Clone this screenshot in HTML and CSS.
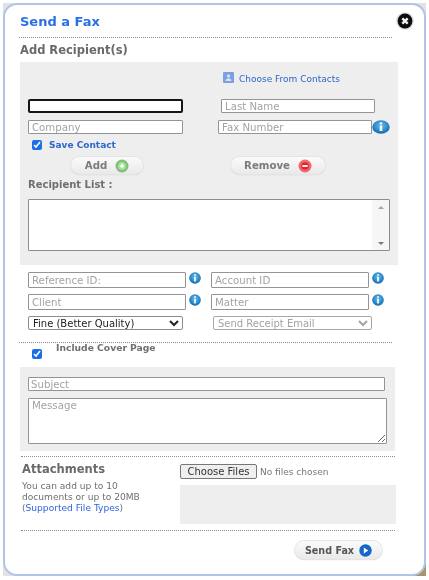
FILE: index.html
```html
<!DOCTYPE html>
<html lang="en">
<head>
    <meta charset="UTF-8">
    <meta name="viewport" content="width=device-width, initial-scale=1.0">
    <title>Send a Fax</title>
    <link rel="stylesheet" href="styles.css">
</head>
<body>
    <svg class="icon-defs" width="0" height="0">
        <defs>
            <radialGradient id="info-fill" cx="50%" cy="40%" r="60%">
                <stop offset="0" stop-color="#6fbbe8"/>
                <stop offset="0.6" stop-color="#2f8fd0"/>
                <stop offset="1" stop-color="#0d66a8"/>
            </radialGradient>
            <symbol id="info" viewBox="0 0 14 14" preserveAspectRatio="none">
                <circle cx="7" cy="7" r="6.8" fill="url(#info-fill)"/>
                <circle cx="7" cy="3.4" r="1.1" fill="#fff"/>
                <rect x="6" y="5.6" width="2" height="5.4" fill="#fff"/>
            </symbol>
        </defs>
    </svg>
    <div class="frame">
    <div class="modal">
        <div class="modal-head">
            <h1 class="title">Send a Fax</h1>
            <svg class="close" width="18" height="18" viewBox="0 0 18 18">
                <circle cx="9" cy="9" r="8.8" fill="#d8d8d8"/>
                <circle cx="9" cy="9" r="7.4" fill="#0c0c0c"/>
                <path d="M6.3 6.3l5.4 5.4M11.7 6.3l-5.4 5.4" stroke="#f2f2f2" stroke-width="2.4"/>
            </svg>
        </div>
        <div class="dots"></div>
        <h2 class="section-title">Add Recipient(s)</h2>

        <div class="panel panel-recipient">
            <div class="contacts-row">
                <svg width="11" height="11" viewBox="0 0 11 11">
                    <rect width="11" height="11" rx="1" fill="#7c9fe0"/>
                    <circle cx="5.5" cy="4" r="1.7" fill="#d5e0f6"/>
                    <path d="M2.5 9c0-2 1.3-2.8 3-2.8s3 .8 3 2.8z" fill="#d5e0f6"/>
                </svg>
                <a class="link contacts-link">Choose From Contacts</a>
            </div>
            <div class="row row-name">
                <input class="field field-focus w155" type="text">
                <input class="field w154 ml38" type="text" placeholder="Last Name">
            </div>
            <div class="row row-company">
                <input class="field w155" type="text" placeholder="Company">
                <input class="field w154 ml35" type="text" placeholder="Fax Number">
                <svg class="info info-fax"><use href="#info"/></svg>
            </div>
            <label class="save-contact">
                <input class="check" type="checkbox" checked>
                <span class="link link-bold">Save Contact</span>
            </label>
            <div class="row-buttons">
                <button class="pill pill-add" type="button">Add
                    <svg width="14" height="14" viewBox="0 0 14 14">
                        <circle cx="7" cy="7" r="6.5" fill="#7cc473"/>
                        <circle cx="7" cy="7" r="4" fill="#a9dca0"/>
                        <path d="M7 4.8v4.4M4.8 7h4.4" stroke="#fff" stroke-width="1.6"/>
                    </svg>
                </button>
                <button class="pill pill-remove" type="button">Remove
                    <svg width="14" height="14" viewBox="0 0 14 14">
                        <circle cx="7" cy="7" r="6.5" fill="#f0686c"/>
                        <circle cx="7" cy="7" r="3.8" fill="#e0262f"/>
                        <path d="M4.3 7h5.4" stroke="#fff" stroke-width="1.8"/>
                    </svg>
                </button>
            </div>
            <div class="list-label">Recipient List :</div>
            <div class="listbox">
                <div class="scroll">
                    <span class="arrow-up"></span>
                    <span class="arrow-down"></span>
                </div>
            </div>
        </div>

        <div class="details">
            <div class="row">
                <input class="field w158 tall" type="text" placeholder="Reference ID:">
                <svg class="info info-detail"><use href="#info"/></svg>
                <input class="field w158 tall ml10" type="text" placeholder="Account ID">
                <svg class="info info-detail"><use href="#info"/></svg>
            </div>
            <div class="row row-client">
                <input class="field w158 tall" type="text" placeholder="Client">
                <svg class="info info-detail"><use href="#info"/></svg>
                <input class="field w158 tall ml10" type="text" placeholder="Matter">
                <svg class="info info-detail"><use href="#info"/></svg>
            </div>
            <div class="row row-select">
                <select class="pick w155">
                    <option>Fine (Better Quality)</option>
                </select>
                <select class="pick pick-muted w159 ml30">
                    <option>Send Receipt Email</option>
                </select>
            </div>
        </div>

        <div class="dots dots-cover"></div>
        <div class="cover-row">
            <input class="check" type="checkbox" checked>
            <span class="cover-label">Include Cover Page</span>
        </div>

        <div class="panel panel-cover">
            <input class="field subject" type="text" placeholder="Subject">
            <textarea class="field message" placeholder="Message"></textarea>
        </div>

        <div class="dots dots-wide dots-attach"></div>
        <div class="attachments">
            <div class="attach-text">
                <h2 class="section-title">Attachments</h2>
                <div class="attach-note">
                    <div>You can add up to 10</div>
                    <div>documents or up to 20MB</div>
                    <div>(<a class="link-plain">Supported File Types</a>)</div>
                </div>
            </div>
            <div class="attach-files">
                <div class="file-row">
                    <button class="file-btn" type="button">Choose Files</button>
                    <span class="file-status">No files chosen</span>
                </div>
                <div class="file-list"></div>
            </div>
        </div>
        <div class="dots dots-wide dots-send"></div>
        <div class="send-row">
            <button class="pill pill-send" type="button">Send Fax
                <svg width="13" height="13" viewBox="0 0 13 13">
                    <circle cx="6.5" cy="6.5" r="6.2" fill="#1466c8"/>
                    <path d="M4.8 3.6l4.4 2.9-4.4 2.9z" fill="#fff"/>
                </svg>
            </button>
        </div>
    </div>
    </div>
</body>
</html>
```

FILE: styles.css
```css
* {
    box-sizing: border-box;
}
body {
    margin: 0;
    background-color: #fff;
    font-family: "DejaVu Sans", Verdana, sans-serif;
    color: #6f6f6f;
}
.icon-defs {
    display: block;
}
.frame {
    width: 423px;
    height: 573px;
    margin: 3px 0 0 3px;
    background: linear-gradient(#a8946a, #a8946a) right bottom / 14px 14px no-repeat, #e2e2e2;
    filter: blur(0.55px);
}
.modal {
    height: 573px;
    padding: 0 0 0 15px;
    background-color: #fff;
    border: 2px solid #b0c4ea;
    border-radius: 14px;
}
.modal-head {
    display: flex;
    justify-content: space-between;
    align-items: center;
    height: 32px;
    padding: 0 10px 0 0;
}
.title {
    margin: 0;
    font-size: 13px;
    color: #2a6fe8;
}
.dots {
    width: 373px;
    margin-left: -1px;
    border-top: 1px dotted #8d8d8d;
}
.dots-wide {
    width: 374px;
    margin-left: 1px;
}
.section-title {
    margin: 6px 0 0;
    height: 12px;
    font-size: 11.5px;
    line-height: 12px;
    color: #6a6a6a;
}
.panel {
    background-color: #eee;
    padding-left: 8px;
}
.panel-recipient {
    width: 378px;
    height: 203px;
    margin-top: 6px;
    padding-top: 10px;
}
.panel-cover {
    width: 375px;
    height: 84px;
    padding-top: 10px;
}
.contacts-row {
    display: flex;
    align-items: flex-start;
    gap: 5px;
    height: 11px;
    margin-left: 195px;
}
.link {
    color: #2c66cc;
}
.contacts-link {
    font-size: 9px;
    line-height: 15px;
}
.link-bold {
    font-size: 9px;
    font-weight: bold;
}
.row {
    display: flex;
    align-items: center;
}
.row-name {
    margin-top: 16px;
}
.row-company {
    height: 14px;
    margin-top: 7px;
}
.field {
    height: 14px;
    padding: 0 3px;
    background-color: #fff;
    border: 1px solid #949494;
    border-radius: 1px;
    font-family: "DejaVu Sans", Verdana, sans-serif;
    font-size: 10.2px;
    outline: none;
}
.field::placeholder {
    color: #a3a3a3;
    opacity: 1;
}
.field-focus {
    border: 2px solid #151515;
    border-radius: 2px;
}
.tall {
    height: 16px;
}
.w154 { width: 154px; }
.w155 { width: 155px; }
.w158 { width: 158px; }
.w159 { width: 159px; }
.ml10 { margin-left: 10px; }
.ml30 { margin-left: 30px; }
.ml35 { margin-left: 35px; }
.ml38 { margin-left: 38px; }
.info {
    flex: none;
    width: 18px;
    height: 14px;
}
.info-detail {
    width: 12px;
    height: 12px;
    margin: -4px 0 0 3px;
}
.save-contact {
    display: flex;
    align-items: center;
    gap: 7px;
    height: 10px;
    margin: 6px 0 0 4px;
}
.check {
    width: 10px;
    height: 10px;
    margin: 0;
    accent-color: #1a6fe8;
}
.row-buttons {
    display: flex;
    height: 17px;
    margin: 7px 0 0 43px;
    gap: 88px;
}
.pill {
    display: flex;
    align-items: center;
    justify-content: center;
    gap: 8px;
    height: 17px;
    padding: 0;
    background: linear-gradient(#fbfbfb, #e9e9e9);
    border: none;
    border-radius: 9px;
    box-shadow: 0 0 0 1px #e4e4e4, 0 1px 1px #c4c4c4;
    font-family: "DejaVu Sans", Verdana, sans-serif;
    font-size: 10.2px;
    font-weight: bold;
    color: #7b7b7b;
}
.pill-add {
    width: 72px;
}
.pill-remove {
    width: 94px;
}
.list-label {
    margin-top: 5px;
    height: 12px;
    font-size: 10px;
    font-weight: bold;
    line-height: 12px;
}
.listbox {
    display: flex;
    justify-content: flex-end;
    width: 362px;
    height: 52px;
    margin-top: 8px;
    background-color: #fff;
    border: 1px solid #8c8c8c;
    border-radius: 1px;
}
.scroll {
    display: flex;
    flex-direction: column;
    justify-content: space-between;
    align-items: center;
    width: 17px;
    padding: 6px 0 5px;
    background-color: #f6f6f6;
}
.arrow-up {
    border: 3px solid transparent;
    border-top: 0;
    border-bottom: 3px solid #a5a5a5;
}
.arrow-down {
    border: 3px solid transparent;
    border-bottom: 0;
    border-top: 3px solid #777;
}
.details {
    margin: 7px 0 0 8px;
}
.row-client,
.row-select {
    margin-top: 6px;
}
.pick {
    height: 14px;
    padding: 0;
    background-color: #fff;
    border: 1px solid #8c8c8c;
    border-radius: 2px;
    font-family: "DejaVu Sans", Verdana, sans-serif;
    font-size: 10px;
    color: #222;
}
.pick-muted {
    color: #a3a3a3;
    border-color: #a8a8a8;
}
.dots-cover {
    margin-top: 12px;
}
.cover-row {
    display: flex;
    height: 24px;
    padding: 6px 0 0 12px;
    gap: 14px;
}
.cover-label {
    margin-top: -7px;
    font-size: 9.2px;
    font-weight: bold;
    line-height: 11px;
}
.subject {
    display: block;
    width: 357px;
    padding: 0 2px;
}
.message {
    display: block;
    width: 359px;
    height: 46px;
    margin-top: 7px;
    padding-top: 1px;
}
.dots-attach {
    margin-top: 5px;
}
.attachments {
    display: flex;
    height: 67px;
    padding-top: 6px;
}
.attach-text {
    width: 160px;
    padding-left: 2px;
}
.attach-text .section-title {
    margin-top: 0;
}
.attach-note {
    margin-top: 6px;
    font-size: 9.1px;
    line-height: 11px;
}
.link-plain {
    color: #2c62e0;
}
.attach-files {
    width: 216px;
}
.file-row {
    display: flex;
    align-items: center;
    gap: 3px;
    height: 16px;
}
.file-btn {
    width: 77px;
    height: 15px;
    padding: 0;
    background-color: #efefef;
    border: 1px solid #777;
    border-radius: 2px;
    font-family: "DejaVu Sans", Verdana, sans-serif;
    font-size: 10px;
    color: #333;
}
.file-status {
    margin-top: 2px;
    font-size: 9px;
    color: #777;
}
.file-list {
    height: 39px;
    margin-top: 6px;
    background-color: #eee;
}
.dots-send {
    margin-top: 6px;
}
.send-row {
    display: flex;
    justify-content: flex-end;
    width: 362px;
    margin-top: 10px;
}
.pill-send {
    width: 87px;
    height: 18px;
    gap: 5px;
    font-size: 9.6px;
    color: #555;
}
```
